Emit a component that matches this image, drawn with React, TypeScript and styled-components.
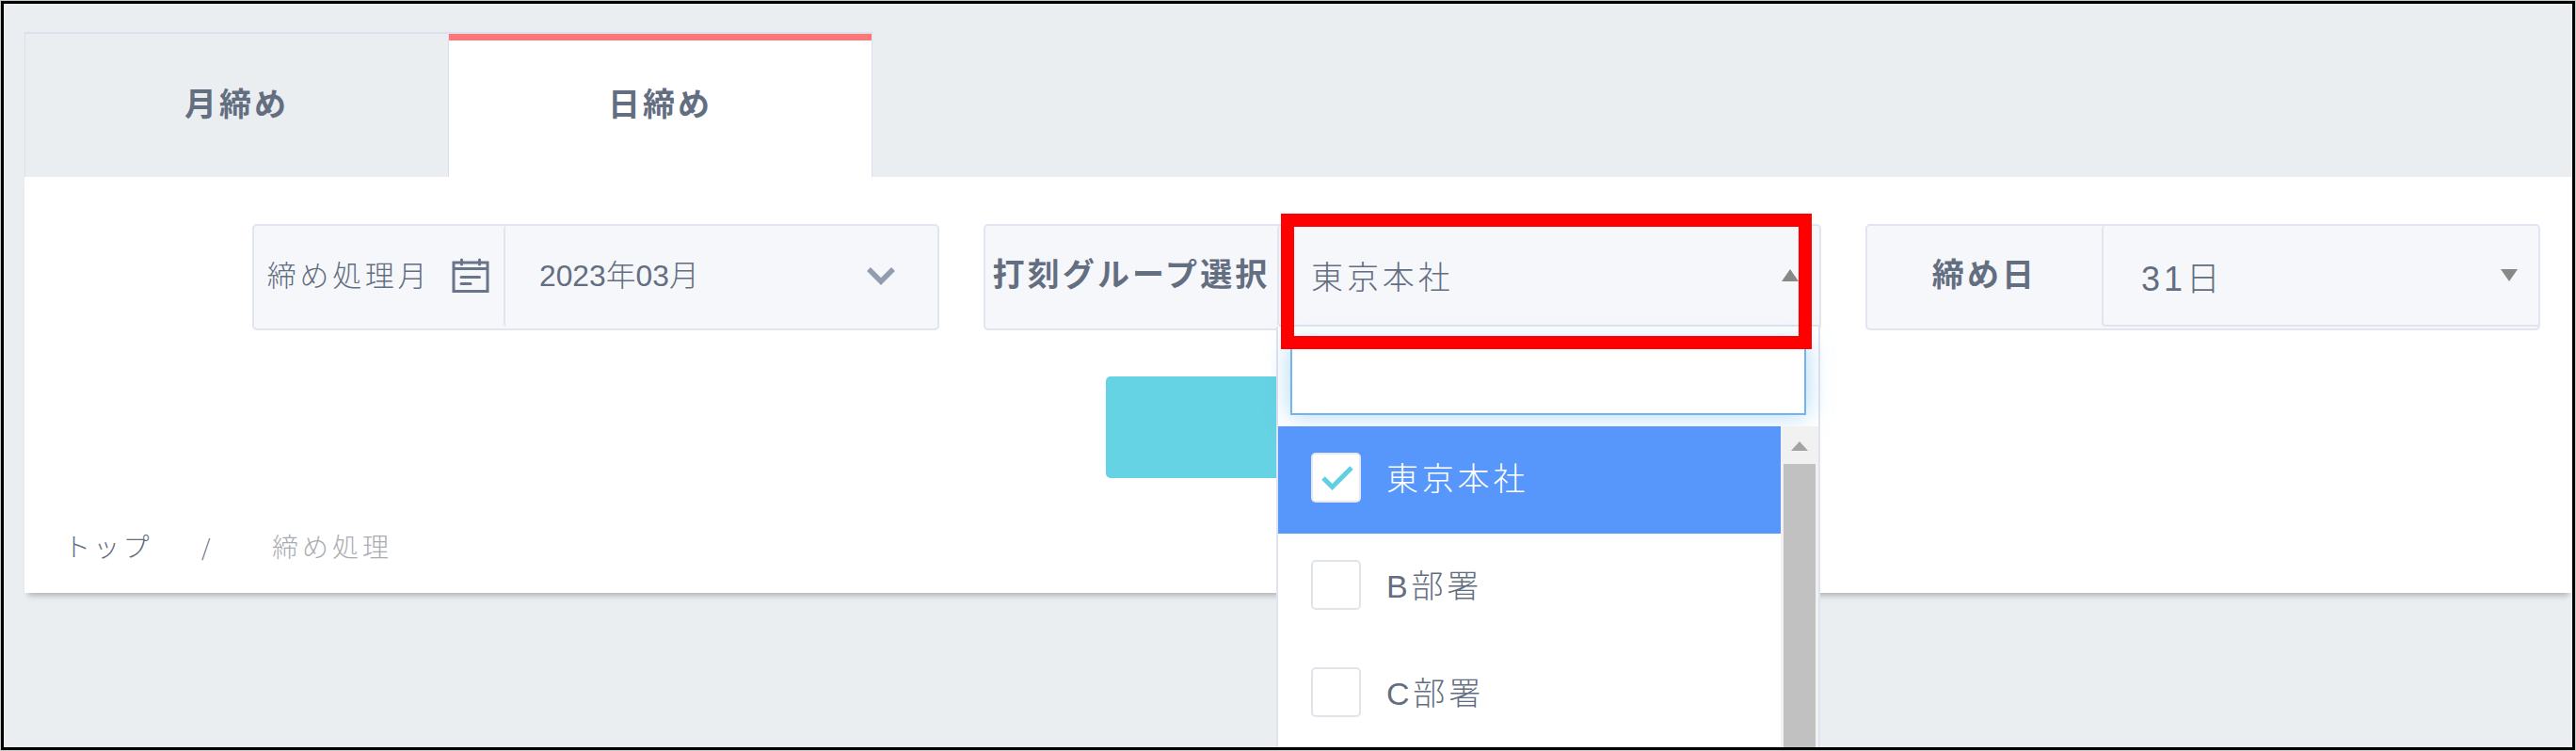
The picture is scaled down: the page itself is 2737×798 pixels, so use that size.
import React from 'react';
import styled, { createGlobalStyle } from 'styled-components';

const GlobalStyle = createGlobalStyle`
  *, *::before, *::after { box-sizing: border-box; }
  body {
    margin: 0;
    font-family: "Liberation Sans", "Noto Sans CJK JP", sans-serif;
    font-weight: 300;
    color: #636e80;
  }
`;

const Frame = styled.div`
  width: 2737px;
  height: 798px;
  border: 1px solid #c8ccc8;
  overflow: hidden;
`;

const Page = styled.div`
  position: relative;
  height: 796px;
  border: 3px solid #000;
  background: #eaeef1;
  padding: 30px 0 0 22px;
  overflow: hidden;
`;

const Tabs = styled.div`
  display: flex;
  height: 154px;
`;

const Tab = styled.div<{ $active?: boolean }>`
  width: ${p => (p.$active ? 451 : 450)}px;
  border: solid #dce0ee;
  border-width: 2px ${p => (p.$active ? 1 : 0)}px 0 1px;
  background: ${p => (p.$active ? '#fff' : 'transparent')};
  box-shadow: ${p => (p.$active ? 'inset 0 7px 0 #ff7678' : 'none')};
  display: flex;
  align-items: center;
  justify-content: center;
  font-size: 34px;
  font-weight: 700;
  letter-spacing: 3px;
  padding-bottom: 8px;
`;

const Panel = styled.section`
  height: 442px;
  background: #fff;
  box-shadow: 0 7px 6px -4px rgba(0, 0, 0, 0.24);
  padding-top: 50px;
`;

const Filters = styled.div`
  display: flex;
  padding-left: 242px;
`;

const Field = styled.div<{ $w: number; $gap?: number }>`
  display: flex;
  width: ${p => p.$w}px;
  height: 113px;
  margin-right: ${p => p.$gap ?? 0}px;
  border: 2px solid #e1e5ef;
  border-radius: 5px;
  background: #f6f7fb;
`;

const Label = styled.div<{ $w: number; $strong?: boolean }>`
  width: ${p => p.$w}px;
  display: flex;
  align-items: center;
  justify-content: center;
  white-space: nowrap;
  font-size: ${p => (p.$strong ? 34 : 31)}px;
  font-weight: ${p => (p.$strong ? 700 : 300)};
  letter-spacing: ${p => (p.$strong ? 3.1 : 3.7)}px;
  padding-bottom: ${p => (p.$strong ? 10 : 9)}px;
  svg { margin-left: 23px; margin-right: 1px; margin-top: 6px; }
`;

const Value = styled.div<{ $pad: number; $spaced?: boolean }>`
  flex: 1;
  height: 107px;
  display: flex;
  align-items: center;
  justify-content: space-between;
  border-left: 2px solid #e1e5ef;
  border-bottom: ${p => (p.$spaced ? '2px solid #dfe4ef' : '0')};
  border-radius: 4px 0 0 4px;
  padding: 0 ${p => (p.$spaced ? 22 : 44)}px 0 ${p => p.$pad}px;
  font-size: ${p => (p.$spaced ? 34 : 31.8)}px;
  letter-spacing: ${p => (p.$spaced ? 3.9 : 0)}px;
`;

const ValueText = styled.span<{ $lift?: number; $size?: number }>`
  padding-bottom: ${p => p.$lift ?? 0}px;
  font-size: ${p => (p.$size ? `${p.$size}px` : 'inherit')};
`;

const Caret = styled.i<{ $up?: boolean; $tone?: string }>`
  border: solid transparent;
  border-width: 0 9px;
  border-${p => (p.$up ? 'bottom' : 'top')}: ${p => (p.$tone ? 10 : 13)}px solid ${p => p.$tone ?? '#888'};
`;

const Search = styled.button`
  display: block;
  width: 357px;
  height: 108px;
  margin: 49px 0 0 1149px;
  border: 0;
  border-radius: 5px;
  background: #66d3e4;
`;

const Breadcrumb = styled.nav`
  display: flex;
  margin: 54px 0 0 42px;
  font-size: 28px;
  line-height: 42px;
  letter-spacing: 4px;
`;

const Home = styled.span`
  width: 145px;
  letter-spacing: 3.2px;
`;

const Slash = styled.span`
  width: 76px;
  padding-left: 1px;
  font-family: "Noto Sans CJK JP", sans-serif;
  font-size: 24px;
  line-height: 38px;
`;

const Current = styled.span`
  color: #a9acb1;
`;

const Menu = styled.div`
  position: absolute;
  left: 1352px;
  top: 343px;
  width: 578px;
  height: 460px;
  border: 2px solid #dfe3f0;
  border-top: 0;
  background: #fff;
`;

const Filter = styled.input`
  display: block;
  width: 548px;
  height: 76px;
  margin: 18px 0 12px 13px;
  border: 2px solid #74b4ec;
  outline: 0;
  background: #fff;
  box-shadow: 0 0 26px rgba(90, 175, 235, 0.5);
`;

const ListArea = styled.div`
  position: relative;
  display: flex;
  height: 354px;
`;

const List = styled.div`
  width: 534px;
  background: #fff;
`;

const Option = styled.div<{ $on?: boolean }>`
  display: flex;
  align-items: center;
  height: 114px;
  padding: 0 0 5px 35px;
  gap: 27px;
  font-size: 34px;
  letter-spacing: 3.8px;
  background: ${p => (p.$on ? '#5796fb' : '#fff')};
  color: ${p => (p.$on ? '#fff' : '#636e80')};
`;

const OptionName = styled.span`
  padding-bottom: 3px;
`;

const Box = styled.span<{ $on?: boolean }>`
  display: flex;
  align-items: center;
  justify-content: center;
  width: 53px;
  height: 53px;
  padding-left: 2px;
  border: 2px solid ${p => (p.$on ? '#e4e9f4' : '#e0e5ea')};
  border-radius: 5px;
  background: #fff;
`;

const Scrollbar = styled.div`
  width: 40px;
  display: flex;
  flex-direction: column;
  align-items: center;
  background: #f1f1f1;
  padding-top: 16px;
`;

const Thumb = styled.div`
  width: 34px;
  height: 400px;
  margin-top: 14px;
  background: #c1c1c1;
`;

const Highlight = styled.div`
  position: absolute;
  left: 1357px;
  top: 223px;
  width: 564px;
  height: 144px;
  border: 14px solid #f00;
`;

const Calendar = () => (
  <svg width="40" height="38" viewBox="0 0 40 38" fill="none" stroke="#6a758a" strokeWidth="3">
    <path d="M2 5H38V35.500H2ZM2 11.500H38" />
    <path d="M10.500 2V7M29.500 2V7M10 20.500H29.500M10 27.500H20" strokeLinecap="round" />
  </svg>
);

const Chevron = () => (
  <svg width="32" height="22" viewBox="0 0 32 22" fill="none" stroke="#929caf" strokeWidth="5.500">
    <path d="M3 3L16 16L29 3" />
  </svg>
);

const Check = () => (
  <svg width="36" height="28" viewBox="0 0 36 28" fill="none" stroke="#5fd0e2" strokeWidth="5">
    <path d="M3 14L12.500 23.500L33 3" />
  </svg>
);

const options = ['東京本社', 'B部署', 'C部署'];

export default function App() {
  return (
    <Frame>
      <GlobalStyle />
      <Page>
        <Tabs>
          <Tab>月締め</Tab>
          <Tab $active>日締め</Tab>
        </Tabs>
        <Panel>
          <Filters>
            <Field $w={730} $gap={47}>
              <Label $w={265}>締め処理月<Calendar /></Label>
              <Value $pad={36}><ValueText $lift={7}>2023年03月</ValueText><Chevron /></Value>
            </Field>
            <Field $w={890} $gap={47}>
              <Label $w={310} $strong>打刻グループ選択</Label>
              <Value $pad={34} $spaced><ValueText $lift={1}>東京本社</ValueText><Caret $up /></Value>
            </Field>
            <Field $w={717}>
              <Label $w={249} $strong>締め日</Label>
              <Value $pad={40} $spaced><ValueText $size={36}>31日</ValueText><Caret /></Value>
            </Field>
          </Filters>
          <Search />
          <Breadcrumb>
            <Home>トップ</Home>
            <Slash>/</Slash>
            <Current>締め処理</Current>
          </Breadcrumb>
        </Panel>
        <Menu>
          <Filter />
          <ListArea>
            <List>
              {options.map((name, i) => (
                <Option key={name} $on={i === 0}>
                  <Box $on={i === 0}>{i === 0 && <Check />}</Box>
                  <OptionName>{name}</OptionName>
                </Option>
              ))}
            </List>
            <Scrollbar>
              <Caret $up $tone="#a3a3a3" />
              <Thumb />
            </Scrollbar>
          </ListArea>
        </Menu>
        <Highlight />
      </Page>
    </Frame>
  );
}
